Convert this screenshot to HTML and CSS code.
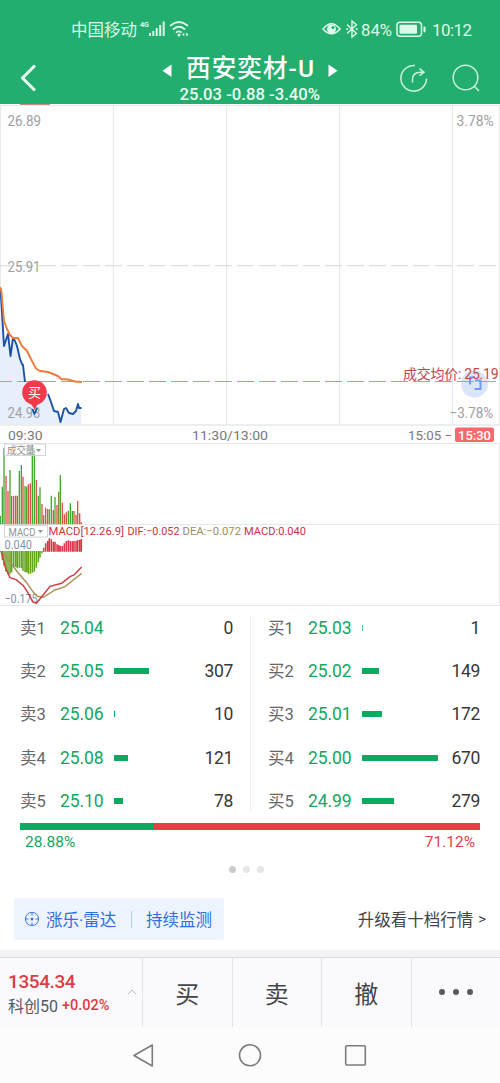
FILE: index.html
```html
<!DOCTYPE html>
<html lang="zh-CN">
<head>
<meta charset="utf-8">
<title>西安奕材-U</title>
<link rel="stylesheet" href="styles.css">
</head>
<body>
<header class="header">
  <svg class="header-art" viewBox="0 0 500 104" width="500" height="104">
    <g fill="#dcfae9">
      <text x="71" y="36" font-size="16.5" textLength="66">中国移动</text>
      <text x="140" y="27" font-size="8" font-weight="700" textLength="9" lengthAdjust="spacingAndGlyphs">4G</text>
      <path d="M149 33h2v3h-2zM152.300 31h2v5h-2zM155.700 28h2v8h-2zM159.200 25h2v11h-2zM162.700 21.500h2v14.500h-2z"/>
      <text x="361" y="36" font-size="17" textLength="31" lengthAdjust="spacingAndGlyphs">84%</text>
      <text x="432" y="36" font-size="17" textLength="40">10:12</text>
    </g>
    <g fill="none" stroke="#dcfae9" stroke-width="1.700" stroke-linecap="round">
      <path d="M170.500 25.500Q179 18.500 187.500 25.500M173.500 29Q179 24.500 184.500 29M176.500 32.200Q179 30.500 181 32.200"/>
      <path d="M323 29Q331.500 18.500 340 29Q331.500 38.500 323 29Z"/>
      <path d="M347.500 25l9 8.500-4.500 3.500v-16l4.500 3.800-9 8.200" stroke-width="1.400"/>
      <rect x="397" y="22.300" width="24.500" height="14" rx="3" stroke-width="1.500"/>
      <path d="M424.500 27.500v4" stroke-width="2"/>
    </g>
    <g fill="#dcfae9">
      <circle cx="331.500" cy="29" r="4.500"/>
      <circle cx="333" cy="27.500" r="1.500" fill="#23ad6e"/>
      <rect x="399.500" y="24.800" width="17.500" height="9" rx="1"/>
      <circle cx="179" cy="35" r="1.500"/>
      <path d="M182 34.500l2.300-2v4zM188.500 34.500l-2.300-2v4zM346.300 28.200h1.800v1.800h-1.800zM355.800 28.200h1.800v1.800h-1.800z"/>
    </g>
    <path d="M35 65.500L22.500 78L35 90.500" fill="none" stroke="#e7fff1" stroke-width="3"/>
    <path d="M171.500 64.500v12.500l-9-6.200zM328.500 64.500v12.500l9-6.200z" fill="#fff"/>
    <text x="186" y="77" font-size="24.500" font-weight="500" fill="#fff" textLength="128">西安奕材-U</text>
    <text x="179.500" y="100" font-size="16.500" font-weight="500" fill="#e9fff2" textLength="140.500" lengthAdjust="spacingAndGlyphs">25.03 -0.88 -3.40%</text>
    <g fill="none" stroke="#c9f5dc" stroke-width="1.500">
      <path d="M415 65.600A12.800 12.800 0 1 0 426.500 78.500"/>
      <path d="M412.500 82.500v-3q0-7.300 8-7.300h3M419.500 68.700l4.500 3.500-4.500 3.500"/>
      <circle cx="465.500" cy="77.500" r="12.300"/>
      <path d="M474.500 86.500l4.500 4.500"/>
    </g>
  </svg>
</header>

<section class="charts">
  <svg class="chart-art" viewBox="0 104 500 502" width="500" height="502">
    <g stroke="#e7e8eb" fill="none">
      <path d="M0 105.500H500M.5 105V425M113.500 105V425M226.500 105V425M339.500 105V425M452.500 105V425M499.500 105V425"/>
      <path d="M0 443.500H500M0 524.500H500M0 605.500H500M499.500 443V605"/>
      <path d="M0 425H500" stroke-width="1.500"/>
      <path d="M0 265.700H500" stroke="#d6d7da" stroke-dasharray="17 5" stroke-dashoffset="5"/>
    </g>
    <path d="M20 104H50" stroke="#b96552" stroke-width="1.500"/>
    <path d="M0 287L4 346L8 334L10 356L13 338L17 344L20 357L23 364L25 382L32 400L34 414L39 405L43 392L49 396L54 410L58 412L60 421L64 409L67 411L73 414L76 412L78 405L81 408V424H0Z" fill="#e8effc"/>
    <g font-size="14.500" fill="#9da0a5">
      <text x="7.500" y="126" textLength="33.500" lengthAdjust="spacingAndGlyphs">26.89</text>
      <text x="7.500" y="272" textLength="33" lengthAdjust="spacingAndGlyphs">25.91</text>
      <text x="7.500" y="418" textLength="33" lengthAdjust="spacingAndGlyphs">24.93</text>
      <text x="456.500" y="126" textLength="37" lengthAdjust="spacingAndGlyphs">3.78%</text>
      <text x="449.500" y="418" textLength="43.500" lengthAdjust="spacingAndGlyphs">−3.78%</text>
    </g>
    <circle cx="474.500" cy="384" r="13.500" fill="#dbe5fa"/>
    <path d="M0 381.500H500" stroke="#e4898f" stroke-dasharray="17 5" stroke-dashoffset="5"/>
    <g fill="none" stroke="#1c51a4" stroke-width="1.900" stroke-linejoin="round">
      <path d="M.5 288L4 346L8 334L10.500 356L13 338L15 341L17 346L20 359L22 364L23 365L25 382M32.500 409L34.500 414L37 408"/>
      <path d="M48 394L51 402L54 411L58 412L60.500 422L64 409L66 408L69 413L73 414L76 411L78 404L79 408H81.500"/>
    </g>
    <path d="M0 287L1.500 292L3 310L4 321L7 329L10 335L13 338L18 338L22 346L27 351L32 361L36 368.500L40 371L48 372L58 376L61 379L68 379.500L75 381.500L82 382" fill="none" stroke="#ee7d3c" stroke-width="1.900" stroke-linejoin="round"/>
    <path d="M30 402L34.500 409.500L39 402Z" fill="#ef394b"/>
    <circle cx="34.500" cy="392.500" r="12.300" fill="#f13b4d"/>
    <text x="28" y="397" font-size="13" fill="#fff">买</text>
    <path d="M470 384.500v-7h3.500M475 380.500h5.500v8.500h-6" fill="none" stroke="#709cf2" stroke-width="2"/>
    <text x="403" y="379" font-size="14" fill="#c5444f" textLength="95.500">成交均价: 25.19</text>
    <g font-size="13.500" fill="#777a7e">
      <text x="8" y="440" textLength="34.500" lengthAdjust="spacingAndGlyphs">09:30</text>
      <text x="192" y="440" textLength="76" lengthAdjust="spacingAndGlyphs">11:30/13:00</text>
      <text x="408" y="440" textLength="44" lengthAdjust="spacingAndGlyphs">15:05 −</text>
    </g>
    <rect x="455" y="427.500" width="39" height="14.500" rx="2" fill="#f7696d"/>
    <text x="458" y="440" font-size="13.500" font-weight="500" fill="#fff" textLength="33" lengthAdjust="spacingAndGlyphs">15:30</text>

    <g transform="translate(0 435) scale(.3333)" fill="none" stroke-width="4">
      <path stroke="#48a62f" d="M1 268V242M7 268V155M12 268V38M30 268V105M47 268V182M58 268V107M64 268V90M75 268V153M80 268V155M97 268V28M103 268V45M115 268V182M120 268V157M131 268V240M143 268V222M154 268V182M165 268V186M181 268V120M205 268V227M211 268V205M217 268V228"/>
      <path stroke="#dc5145" d="M18 268V122M24 268V168M35 268V183M41 268V183M52 268V182M69 268V125M85 268V148M91 268V145M109 268V135M126 268V207M137 268V218M160 268V225M171 268V210M187 268V203M193 268V238M199 268V232M222 268V228M228 268V240M233 268V198M239 268V235M244 268V262"/>
      <path stroke="#8e873e" d="M148 268V223M176 268V170"/>
      <path stroke="#62a31a" stroke-width="4.500" d="M2 348V352M7 348V375M12 348V392M18 348V410M24 348V418M30 348V417M35 348V412M41 348V398M47 348V396M52 348V400M58 348V398M64 348V400M69 348V408M75 348V412M80 348V412M85 348V416M91 348V416M97 348V413M103 348V410M109 348V398M115 348V382M120 348V368M126 348V355"/>
      <path stroke="#de3548" stroke-width="4.600" d="M131 350V338M137 350V325M143 350V318M148 350V310M154 350V313M160 350V320M165 350V320M171 350V328M176 350V330M181 350V333M187 350V333M193 350V325M199 350V318M205 350V316M211 350V318M217 350V319M222 350V318M228 350V318M233 350V315M239 350V314M244 350V312"/>
    </g>
    <g fill="#fff" fill-opacity=".6" stroke="#c9cbce" stroke-width=".8">
      <rect x="4.500" y="444" width="41" height="11.500"/>
      <rect x="4.500" y="525.500" width="43" height="11.500"/>
    </g>
    <g fill="#909397">
      <text x="7" y="453.500" font-size="9.700" textLength="28">成交量</text>
      <text x="8.500" y="535.500" font-size="10.500" textLength="27" lengthAdjust="spacingAndGlyphs">MACD</text>
      <path d="M36 449h5l-2.500 3zM38 530h5l-2.500 3z"/>
    </g>
    <g font-size="12" fill="#8293b0">
      <text x="4.500" y="548.500" textLength="27.500" lengthAdjust="spacingAndGlyphs">0.040</text>
      <text x="4.500" y="602.500" textLength="33" lengthAdjust="spacingAndGlyphs">−0.175</text>
    </g>
    <g transform="translate(0 435) scale(.3333)" fill="none" stroke-width="4.500">
      <path stroke="#ad9257" d="M4 350L14 360L32 383L50 408L80 443L100 472L112 484L130 487L165 465L195 455L220 435L245 415"/>
      <path stroke="#ce3c46" d="M4 352L17 400L30 428L48 434L70 452L85 475L98 500L109 505L124 487L150 454L185 445L210 425L222 420L245 396"/>
    </g>
    <g font-size="11.500">
      <text x="48.500" y="535" fill="#ca3540" textLength="75.500" lengthAdjust="spacingAndGlyphs">MACD[12.26.9]</text>
      <text x="127.500" y="535" fill="#ca3540" textLength="52" lengthAdjust="spacingAndGlyphs">DIF:−0.052</text>
      <text x="182.500" y="535" fill="#a08d60" textLength="58.500" lengthAdjust="spacingAndGlyphs">DEA:−0.072</text>
      <text x="244" y="535" fill="#ca3540" textLength="62" lengthAdjust="spacingAndGlyphs">MACD:0.040</text>
    </g>
  </svg>
</section>

<section class="book">
  <div class="side sell">
    <div class="row"><span class="label">卖1</span><span class="price">25.04</span><span class="track"></span><span class="qty">0</span></div>
    <div class="row"><span class="label">卖2</span><span class="price">25.05</span><span class="track"><i class="bar" style="width:35px"></i></span><span class="qty">307</span></div>
    <div class="row"><span class="label">卖3</span><span class="price">25.06</span><span class="track"><i class="bar" style="width:1px"></i></span><span class="qty">10</span></div>
    <div class="row"><span class="label">卖4</span><span class="price">25.08</span><span class="track"><i class="bar" style="width:14px"></i></span><span class="qty">121</span></div>
    <div class="row"><span class="label">卖5</span><span class="price">25.10</span><span class="track"><i class="bar" style="width:9px"></i></span><span class="qty">78</span></div>
  </div>
  <div class="side buy">
    <div class="row"><span class="label">买1</span><span class="price">25.03</span><span class="track"><i class="bar faint" style="width:1px"></i></span><span class="qty">1</span></div>
    <div class="row"><span class="label">买2</span><span class="price">25.02</span><span class="track"><i class="bar" style="width:17px"></i></span><span class="qty">149</span></div>
    <div class="row"><span class="label">买3</span><span class="price">25.01</span><span class="track"><i class="bar" style="width:20px"></i></span><span class="qty">172</span></div>
    <div class="row"><span class="label">买4</span><span class="price">25.00</span><span class="track"><i class="bar" style="width:76px"></i></span><span class="qty">670</span></div>
    <div class="row"><span class="label">买5</span><span class="price">24.99</span><span class="track"><i class="bar" style="width:32px"></i></span><span class="qty">279</span></div>
  </div>
</section>

<section class="ratio">
  <div class="ratio-bar"><i class="ratio-fill" style="width:28.88%"></i></div>
  <div class="ratio-text"><span class="down">28.88%</span><span class="up">71.12%</span></div>
</section>
<div class="dots"><i class="dot on"></i><i class="dot"></i><i class="dot"></i></div>

<section class="promo">
  <div class="radar">
    <svg viewBox="0 0 16 16" width="16" height="16" fill="none" stroke="#3c76df"><circle cx="8" cy="8" r="6.600"/><path d="M8 1v3.500M8 11.500V15M1 8h3.500M11.500 8H15"/><circle cx="8" cy="8" r="1.500" fill="#3c76df" stroke="none"/></svg>
    <span class="radar-name">涨乐·雷达</span><i class="sep"></i><span class="watch">持续监测</span>
  </div>
  <div class="upgrade">升级看十档行情<span class="gt">&gt;</span></div>
</section>

<nav class="trade">
  <div class="index">
    <div>
      <div class="index-value">1354.34</div>
      <div class="index-line"><span class="index-name">科创50</span><span class="index-change">+0.02%</span></div>
    </div>
    <svg class="caret" viewBox="0 0 10 6" width="10" height="6" fill="none" stroke="#b5b7bb"><path d="M1 5.200L5 1l4 4.200"/></svg>
  </div>
  <div class="action">买</div>
  <div class="action">卖</div>
  <div class="action">撤</div>
  <div class="action more"><i class="pt"></i><i class="pt"></i><i class="pt"></i></div>
</nav>

<footer class="system">
  <svg viewBox="0 0 500 56" width="500" height="56" fill="none" stroke="#7b7c7e" stroke-width="1.600" stroke-linejoin="round">
    <path d="M134 28.500L152.300 18V39Z"/><circle cx="250" cy="28.300" r="10.500"/><rect x="345.700" y="18.700" width="19.600" height="19.300" rx="1"/>
  </svg>
</footer>
</body>
</html>
```
FILE: styles.css
```css
* { box-sizing: border-box; }
body {
  margin: 0;
  width: 500px;
  height: 1083px;
  overflow: hidden;
  display: flex;
  flex-direction: column;
  background: #fff;
  font-family: Roboto, "Noto Sans CJK SC", sans-serif;
}
svg { display: block; }
i { display: block; }
.header { height: 104px; background: #23ad6e; }
.charts { height: 502px; background: #fefefe; }

.book { display: flex; height: 217px; }
.side { width: 250px; }
.sell { padding: 0 17px 0 20px; }
.buy { padding: 0 20px 0 18px; position: relative; }
.buy::before {
  content: "";
  position: absolute;
  left: 0;
  top: 10px;
  height: 196px;
  border-left: 1px solid #eff0f2;
}
.row {
  display: flex;
  align-items: center;
  height: 43.3px;
  font-size: 17.5px;
  color: #36383c;
}
.label {
  width: 40px;
  padding-bottom: 2px;
  font-size: 16.5px;
  color: #66686c;
  white-space: nowrap;
}
.price { width: 54px; color: #13a75f; letter-spacing: -0.1px; }
.track { flex: 1; }
.bar { height: 6px; background: #0caa60; }
.faint { opacity: .65; }
.qty { text-align: right; letter-spacing: -0.3px; }

.ratio { padding: 0 20px; }
.ratio-bar { height: 7px; background: #eb3d47; }
.ratio-fill { height: 7px; background: #0caa60; }
.ratio-text {
  display: flex;
  justify-content: space-between;
  padding: 2px 5px 0;
  font-size: 15.5px;
  line-height: 20px;
}
.down { color: #13a75f; }
.up { color: #df3f4d; }
.dots { display: flex; justify-content: center; gap: 7px; margin-top: 14px; padding-right: 7px; }
.dot { width: 7px; height: 7px; border-radius: 50%; background: #e6e6e8; }
.on { background: #ccccd0; }

.promo {
  display: flex;
  justify-content: space-between;
  align-items: center;
  margin-top: 25px;
  padding: 0 14px;
  height: 42px;
}
.radar {
  display: flex;
  align-items: center;
  width: 210px;
  height: 42px;
  padding-left: 10px;
  border-radius: 3px;
  background: #edf4fe;
  color: #2f6fdf;
  font-size: 16.5px;
}
.radar-name { margin-left: 6px; width: 72px; white-space: nowrap; }
.sep { width: 1px; height: 17px; margin: 0 14px 0 13px; background: #b6cbee; }
.watch { white-space: nowrap; }
.upgrade { display: flex; align-items: center; font-size: 16.5px; color: #424448; }
.gt { margin-left: 5px; font-size: 15px; }

.trade {
  display: flex;
  margin-top: 10px;
  height: 77px;
  border-top: 7px solid #f3f3f7;
  background: #fafafc;
  box-shadow: inset 0 1px #dcdde5;
}
.index { display: flex; width: 142px; padding: 13px 5px 0 8px; justify-content: space-between; }
.index-value {
  font-size: 19px;
  line-height: 23px;
  font-weight: 500;
  color: #dc3c45;
  letter-spacing: -0.4px;
}
.index-line { display: flex; align-items: center; gap: 4px; height: 24px; white-space: nowrap; }
.index-name { font-size: 16px; color: #56585c; }
.index-change { font-size: 14.5px; color: #dc3c45; font-weight: 500; }
.caret { margin-top: 19px; }
.action {
  flex: 1;
  display: flex;
  align-items: center;
  justify-content: center;
  border-left: 1px solid #e3e4ea;
  font-size: 24px;
  color: #44464a;
}
.more { gap: 8px; }
.pt { width: 6px; height: 6px; border-radius: 50%; background: #595a5e; }
.system { height: 56px; background: #fcfcfc; }
```
